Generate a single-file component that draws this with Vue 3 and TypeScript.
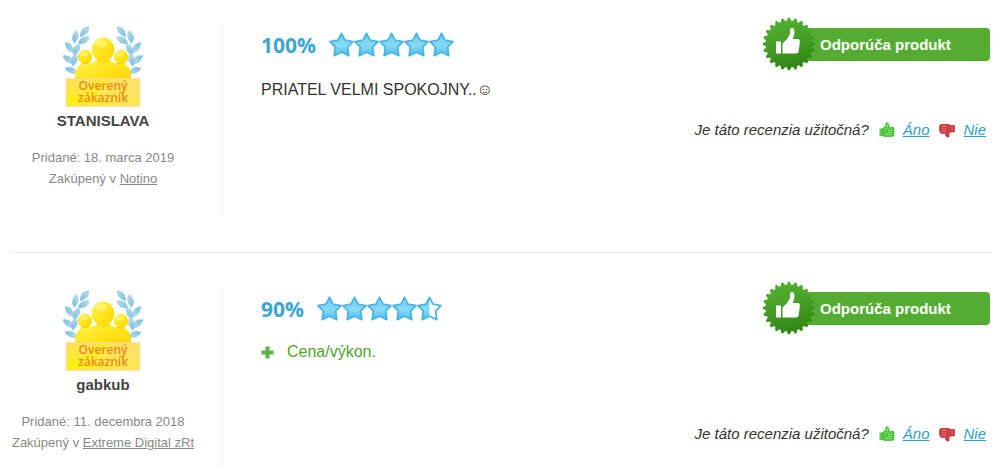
<script setup lang="ts">
interface Review {
  id: number
  author: string
  added: string
  shop: string
  score: number
  text?: string
  pros?: string[]
}

const reviews: Review[] = [
  { id: 1, author: 'STANISLAVA', added: '18. marca 2019', shop: 'Notino', score: 100, text: 'PRIATEL VELMI SPOKOJNY..☺' },
  { id: 2, author: 'gabkub', added: '11. decembra 2018', shop: 'Extreme Digital zRt', score: 90, pros: ['Cena/výkon.'] },
]

const starPath = 'M12.5 1.4 L16 8.2 L24 9.6 L18.6 15.2 L19.8 23.6 L12.5 20.2 L5.2 23.6 L6.4 15.2 L1 9.6 L9 8.2 Z'

const starWidth = (score: number, n: number): number =>
  Math.max(0, Math.min(1, score / 20 - (n - 1))) * 25

// Alternating outer and inner points of the serrated seal
const teeth = 24
const seal = Array.from({ length: teeth * 4 }, (_, i) => {
  const step = (Math.PI * 2) / (teeth * 4)
  const r = i % 4 < 2 ? 26.3 : 23.4
  const a = (i - 0.5) * step - Math.PI / 2
  return `${(27 + r * Math.cos(a)).toFixed(2)},${(27 + r * Math.sin(a)).toFixed(2)}`
}).join(' ')

// Leaves of the left laurel branch: x, y, rotation
const leaves = [
  [22, 6, -40], [13, 11, -68], [21, 15, -22], [6, 22, 62],
  [14, 24, -55], [5, 34, 48], [12, 34, -66], [8, 45, 30],
]
</script>

<template>
  <main class="reviews">
    <article v-for="r in reviews" :key="r.id" class="review">
      <aside class="author">
        <svg class="avatar" viewBox="0 0 80 82" role="img" aria-label="Overený zákazník">
          <defs>
            <linearGradient :id="`gold${r.id}`" x1="0" y1="0" x2="1" y2="1">
              <stop offset="0" stop-color="#fff04a" />
              <stop offset=".5" stop-color="#ffe51c" />
              <stop offset="1" stop-color="#f9d400" />
            </linearGradient>
            <linearGradient :id="`plate${r.id}`" x1="0" y1="1" x2="1" y2="0">
              <stop offset="0" stop-color="#fff000" />
              <stop offset=".4" stop-color="#ffe64a" />
              <stop offset="1" stop-color="#ffdf70" />
            </linearGradient>
            <linearGradient :id="`leaf${r.id}`" x1="0" y1="0" x2="1" y2="0">
              <stop offset="0" stop-color="#7fbfde" />
              <stop offset="1" stop-color="#b9ddec" />
            </linearGradient>
          </defs>
          <g v-for="side in 2" :key="side" :transform="side === 2 ? 'translate(80 0) scale(-1 1)' : undefined">
            <path
              v-for="(l, i) in leaves" :key="i" d="M-7 1 Q-2 -7 7 -2 Q3 5 -7 1Z"
              :fill="`url(#leaf${r.id})`" :transform="`translate(${l[0]} ${l[1]}) rotate(${l[2]})`"
            />
          </g>
          <g :fill="`url(#gold${r.id})`">
            <path d="M12 55 V47 Q14 39 21 37 H59 Q66 39 68 47 V55Z" />
            <circle cx="22" cy="31" r="7.200" />
            <circle cx="58" cy="31" r="7.200" />
            <path d="M24 55 V42 Q28 36 36 34 H44 Q52 36 56 42 V55Z" />
            <ellipse cx="40" cy="23.500" rx="11.300" ry="12" />
          </g>
          <path d="M32 34 Q40 38 48 34" fill="none" stroke="#eccb00" stroke-width="1" opacity=".6" />
          <path d="M18 37 Q22 39 26 37 M54 37 Q58 39 62 37" fill="none" stroke="#eccb00" stroke-width="1" opacity=".6" />
          <ellipse cx="38" cy="17" rx="7" ry="4" fill="#fff99a" opacity=".5" />
          <ellipse cx="21" cy="28" rx="4" ry="2.500" fill="#fff99a" opacity=".5" />
          <ellipse cx="57" cy="28" rx="4" ry="2.500" fill="#fff99a" opacity=".5" />
          <rect x="3.500" y="53" width="73" height="27" :fill="`url(#plate${r.id})`" stroke="#f9dc86" stroke-width="1.5" />
          <path d="M4 79 V70 Q16 76 33 54 H48 Q31 76 18 79Z" fill="#fff200" opacity=".4" />
          <text x="40" y="64" class="plate-text">Overený</text>
          <text x="40" y="76" class="plate-text">zákazník</text>
        </svg>
        <strong class="name">{{ r.author }}</strong>
        <p class="meta">Pridané: {{ r.added }}<br>Zakúpený v <a href="#">{{ r.shop }}</a></p>
      </aside>

      <section class="body">
        <header class="head">
          <div class="rating">
            <span class="percent">{{ r.score }}%</span>
            <span class="stars">
              <svg v-for="n in 5" :key="n" viewBox="0 0 25 25" aria-hidden="true">
                <defs>
                  <linearGradient :id="`star${r.id}${n}`" x1="0" y1="0" x2="0" y2="1">
                    <stop offset="0" stop-color="#70cff2" />
                    <stop offset=".55" stop-color="#86daf5" />
                    <stop offset="1" stop-color="#50bdea" />
                  </linearGradient>
                  <clipPath :id="`clip${r.id}${n}`"><rect :width="starWidth(r.score, n)" height="25" /></clipPath>
                </defs>
                <path :d="starPath" fill="#fff" />
                <path :d="starPath" :fill="`url(#star${r.id}${n})`" :clip-path="`url(#clip${r.id}${n})`" />
                <path :d="starPath" fill="none" stroke="#4ab4e7" stroke-width="1.800" stroke-linejoin="round" />
              </svg>
            </span>
          </div>
          <div class="recommend">
            <svg class="seal" viewBox="0 0 54 54" aria-hidden="true">
              <defs>
                <linearGradient :id="`seal${r.id}`" x1="0" y1="0" x2=".25" y2="1">
                  <stop offset="0" stop-color="#55b332" />
                  <stop offset=".5" stop-color="#48a128" />
                  <stop offset="1" stop-color="#318817" />
                </linearGradient>
              </defs>
              <polygon :points="seal" :fill="`url(#seal${r.id})`" />
              <path d="M14 24.500h5v12h-5z M20.500 26.500 L25 22 L28 17 V13 Q28 11 30 11 Q32.500 11 32.500 15.500 L31 22 H36.500 Q38 22.500 37.800 25 L36.800 34 Q36.500 36.500 34 36.500 H20.500Z" fill="#fff" />
            </svg>
            Odporúča produkt
          </div>
        </header>
        <p v-if="r.text" class="text">{{ r.text }}</p>
        <ul v-if="r.pros" class="pros">
          <li v-for="p in r.pros" :key="p">
            <svg viewBox="0 0 13 13" aria-hidden="true"><path d="M4.500 .5h4v4h4v4h-4v4h-4v-4h-4v-4h4z" fill="#5db146" /></svg>
            {{ p }}
          </li>
        </ul>
        <footer class="vote">
          <span class="question">Je táto recenzia užitočná?</span>
          <a href="#" class="choice">
            <svg viewBox="0 0 16 16" aria-hidden="true">
              <path d="M.5 6.500 H4 V14 H.5Z" fill="#5ccb48" />
              <path d="M3.500 6.500 L6.500 4 L7 .8 Q10 .5 10 3 V5.500 H15 V13.500 L13.500 14.500 H5 L3.500 13.500Z" fill="#52c641" stroke="#43b634" stroke-width=".7" />
              <path d="M8 5.500 V2 M5.500 7 L8 6.500 M9 8 h4 M9 10.500 h4 M6 12.500 h6" stroke="#8be474" stroke-width="1.200" />
            </svg>
            <span>Áno</span>
          </a>
          <a href="#" class="choice">
            <svg viewBox="0 0 16 16" aria-hidden="true">
              <path d="M1.500 2.500 H10 L11.500 3.500 H15.500 V10 H11.500 L10 11.500 V15 Q6.500 15.500 6.500 13 V11.500 H2 L.5 9 V4Z" fill="#cc3f42" stroke="#bd3337" stroke-width=".7" />
              <path d="M3 4.500 h5 M3 7 h4 M3 9.500 h4 M13 4.500 v4" stroke="#df7171" stroke-width="1.100" />
            </svg>
            <span>Nie</span>
          </a>
        </footer>
      </section>
    </article>
  </main>
</template>

<style>
body {
  margin: 0;
  background: #fff;
}
</style>

<style scoped>
.reviews {
  box-sizing: border-box;
  min-height: 100vh;
  padding: 26px 12px 0 10px;
  display: flex;
  flex-direction: column;
  font-family: "Liberation Sans", Arial, "DejaVu Sans", sans-serif;
  font-size: 16px;
  line-height: 20px;
  color: #333;
}
.review {
  display: grid;
  grid-template-columns: 213px 1fr;
}
.review + .review {
  flex: 1;
  margin-top: 37px;
  padding-top: 37px;
  border-top: 1px solid #ececec;
}
.author {
  display: flex;
  flex-direction: column;
  align-items: center;
  padding-right: 26px;
  padding-bottom: 26px;
  border-right: 1px solid #ececec;
  text-align: center;
}
.avatar {
  width: 80px;
  height: 82px;
}
.plate-text {
  font: 600 12px "Open Sans", sans-serif;
  fill: #ea8c18;
  text-anchor: middle;
}
.name {
  margin-top: 3px;
  font-size: 15px;
  color: #444;
}
.meta {
  margin: 16px 0 0;
  font-size: 13px;
  line-height: 21px;
  color: #888;
  white-space: nowrap;
}
.meta a {
  color: inherit;
}
.body {
  padding-left: 38px;
}
.head {
  display: flex;
  justify-content: space-between;
  align-items: center;
  height: 37px;
}
.rating {
  display: flex;
  align-items: center;
  gap: 13px;
}
.percent {
  font: 700 21px/30px "Open Sans", sans-serif;
  color: #3ba5d4;
}
.stars {
  display: flex;
}
.stars svg {
  width: 25px;
  height: 25px;
}
.recommend {
  position: relative;
  box-sizing: border-box;
  width: 202px;
  margin-right: 2px;
  padding-left: 32px;
  border-radius: 4px;
  background: #54ad32;
  color: #fff;
  font-size: 15px;
  font-weight: 700;
  line-height: 33px;
}
.seal {
  position: absolute;
  left: -26px;
  top: -11px;
  width: 54px;
  height: 54px;
}
.text {
  margin: 17px 0 0;
}
.pros {
  margin: 15px 0 62px;
  padding: 0;
  list-style: none;
  color: #4fa52c;
}
.pros li {
  display: flex;
  align-items: center;
  gap: 13px;
}
.pros svg {
  width: 13px;
  height: 13px;
}
.vote {
  display: flex;
  justify-content: flex-end;
  align-items: center;
  gap: 10px;
  margin-top: 20px;
  padding-right: 6px;
  font-size: 15px;
  font-style: italic;
}
.choice {
  display: flex;
  align-items: center;
  gap: 8px;
  color: #2ba0d0;
  text-decoration: none;
}
.choice span {
  text-decoration: underline;
}
.choice svg {
  width: 16px;
  height: 16px;
}
</style>
